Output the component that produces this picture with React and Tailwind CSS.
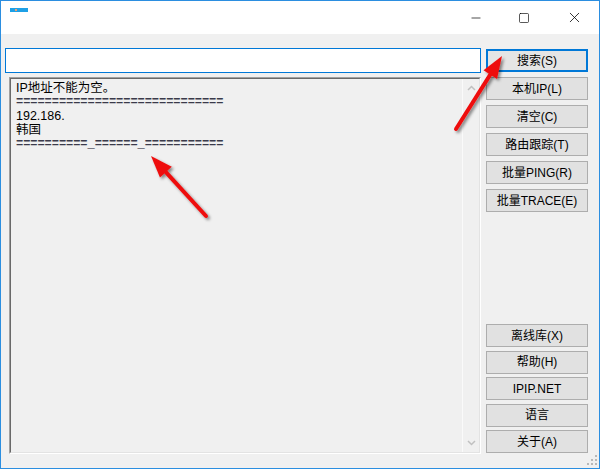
import { Minus, Square, X } from 'lucide-react'

const topButtons = ['搜索(S)', '本机IP(L)', '清空(C)', '路由跟踪(T)', '批量PING(R)', '批量TRACE(E)']
const bottomButtons = ['离线库(X)', '帮助(H)', 'IPIP.NET', '语言', '关于(A)']

const lines = [
  'IP地址不能为空。',
  '=============================',
  '192.186.',
  '韩国',
  '==========_======_===========',
]

function WinButton({ label, focused }) {
  return (
    <button
      className={
        'h-[23px] w-full text-[12px] text-black leading-none ' +
        (focused
          ? 'border-2 border-[#0078d7] bg-[#e5e5e5]'
          : 'border border-[#adadad] bg-[#e1e1e1]')
      }
    >
      {label}
    </button>
  )
}

function Arrow({ x1, y1, x2, y2 }) {
  const a = Math.atan2(y2 - y1, x2 - x1)
  const len = 22
  const w = 8
  const bx = x2 - Math.cos(a) * len
  const by = y2 - Math.sin(a) * len
  const px = -Math.sin(a) * w
  const py = Math.cos(a) * w
  return (
    <g filter="url(#shadow)">
      <line x1={x1} y1={y1} x2={bx} y2={by} stroke="#ee1111" strokeWidth="4" strokeLinecap="round" />
      <polygon points={`${x2},${y2} ${bx + px},${by + py} ${bx - px},${by - py}`} fill="#ee1111" />
    </g>
  )
}

function Grip() {
  const dots = [
    [8, 0],
    [4, 4], [8, 4],
    [0, 8], [4, 8], [8, 8],
  ]
  return (
    <div className="absolute right-[2px] bottom-[3px] w-[10px] h-[10px]">
      {dots.map(([x, y], i) => (
        <span key={i} className="absolute w-[2px] h-[2px] bg-[#b8b8b8]" style={{ left: x, top: y }} />
      ))}
    </div>
  )
}

export default function App() {
  return (
    <div
      className="relative w-[600px] h-[469px] border border-[#2b8ee0] bg-[#f0f0f0] flex flex-col overflow-hidden"
      style={{ fontFamily: '"Liberation Sans", "Noto Sans CJK SC", sans-serif' }}
    >
      {/* title bar */}
      <div className="h-[33px] bg-white flex items-start shrink-0">
        <div className="mt-[7px] ml-[9px] w-[18px] h-[4px] bg-[#1ea0e6] relative">
          <span className="absolute left-[5px] top-[1px] w-[2px] h-[2px] bg-[#f0a070]" />
        </div>
        <div className="ml-auto flex h-full">
          <div className="w-[46px] flex items-center justify-center">
            <Minus size={14} strokeWidth={1.2} className="text-black" />
          </div>
          <div className="w-[50px] flex items-center justify-center">
            <Square size={12} strokeWidth={1.3} className="text-black" />
          </div>
          <div className="w-[50px] flex items-center justify-center">
            <X size={17} strokeWidth={1.1} className="text-black" />
          </div>
        </div>
      </div>

      {/* body */}
      <div className="flex-1 flex pl-[4px] pr-[10px] pt-[14px] pb-[14px] gap-[5px]">
        <div className="w-[476px] flex flex-col gap-[4px]">
          <input className="h-[25px] w-full border border-[#0078d7] bg-white outline-none px-1 text-[12px]" />
          <div className="ml-[4px] flex-1 flex border border-t-[#a0a0a0] border-l-[#a0a0a0] border-r-white border-b-white">
            <div className="flex-1 flex border border-t-[#696969] border-l-[#696969] border-r-[#e3e3e3] border-b-[#e3e3e3]">
              <div className="flex-1 pt-[2px] pl-[5px] text-[12.5px] leading-[14px] text-black">
                {lines.map((l, i) => (
                  <div
                    key={i}
                    className={l.startsWith('=') ? 'font-mono text-[12px] font-bold tracking-[-0.05px] text-[#3a3a4a]' : ''}
                  >
                    {l}
                  </div>
                ))}
              </div>
              {/* scrollbar */}
              <div className="w-[17px] flex flex-col justify-between items-center border-l border-[#fafafa] py-[6px]">
                <svg width="9" height="6" viewBox="0 0 9 6">
                  <path d="M1 5 L4.5 1.5 L8 5" stroke="#c0c0c0" strokeWidth="1.5" fill="none" />
                </svg>
                <svg width="9" height="6" viewBox="0 0 9 6">
                  <path d="M1 1 L4.5 4.5 L8 1" stroke="#c0c0c0" strokeWidth="1.5" fill="none" />
                </svg>
              </div>
            </div>
          </div>
        </div>

        <div className="w-[102px] flex flex-col justify-between pt-[1px] pb-[1px]">
          <div className="flex flex-col gap-[5px]">
            {topButtons.map((b, i) => (
              <WinButton key={b} label={b} focused={i === 0} />
            ))}
          </div>
          <div className="flex flex-col gap-[3.5px]">
            {bottomButtons.map((b) => (
              <WinButton key={b} label={b} />
            ))}
          </div>
        </div>
      </div>

      <Grip />

      {/* callout arrows */}
      <svg className="absolute inset-0 pointer-events-none" width="600" height="469">
        <defs>
          <filter id="shadow" x="-20%" y="-20%" width="140%" height="140%">
            <feDropShadow dx="2" dy="2" stdDeviation="1.5" floodColor="#000" floodOpacity="0.45" />
          </filter>
        </defs>
        <Arrow x1={455} y1={128} x2={501} y2={55} />
        <Arrow x1={205} y1={215} x2={150} y2={155} />
      </svg>
    </div>
  )
}
